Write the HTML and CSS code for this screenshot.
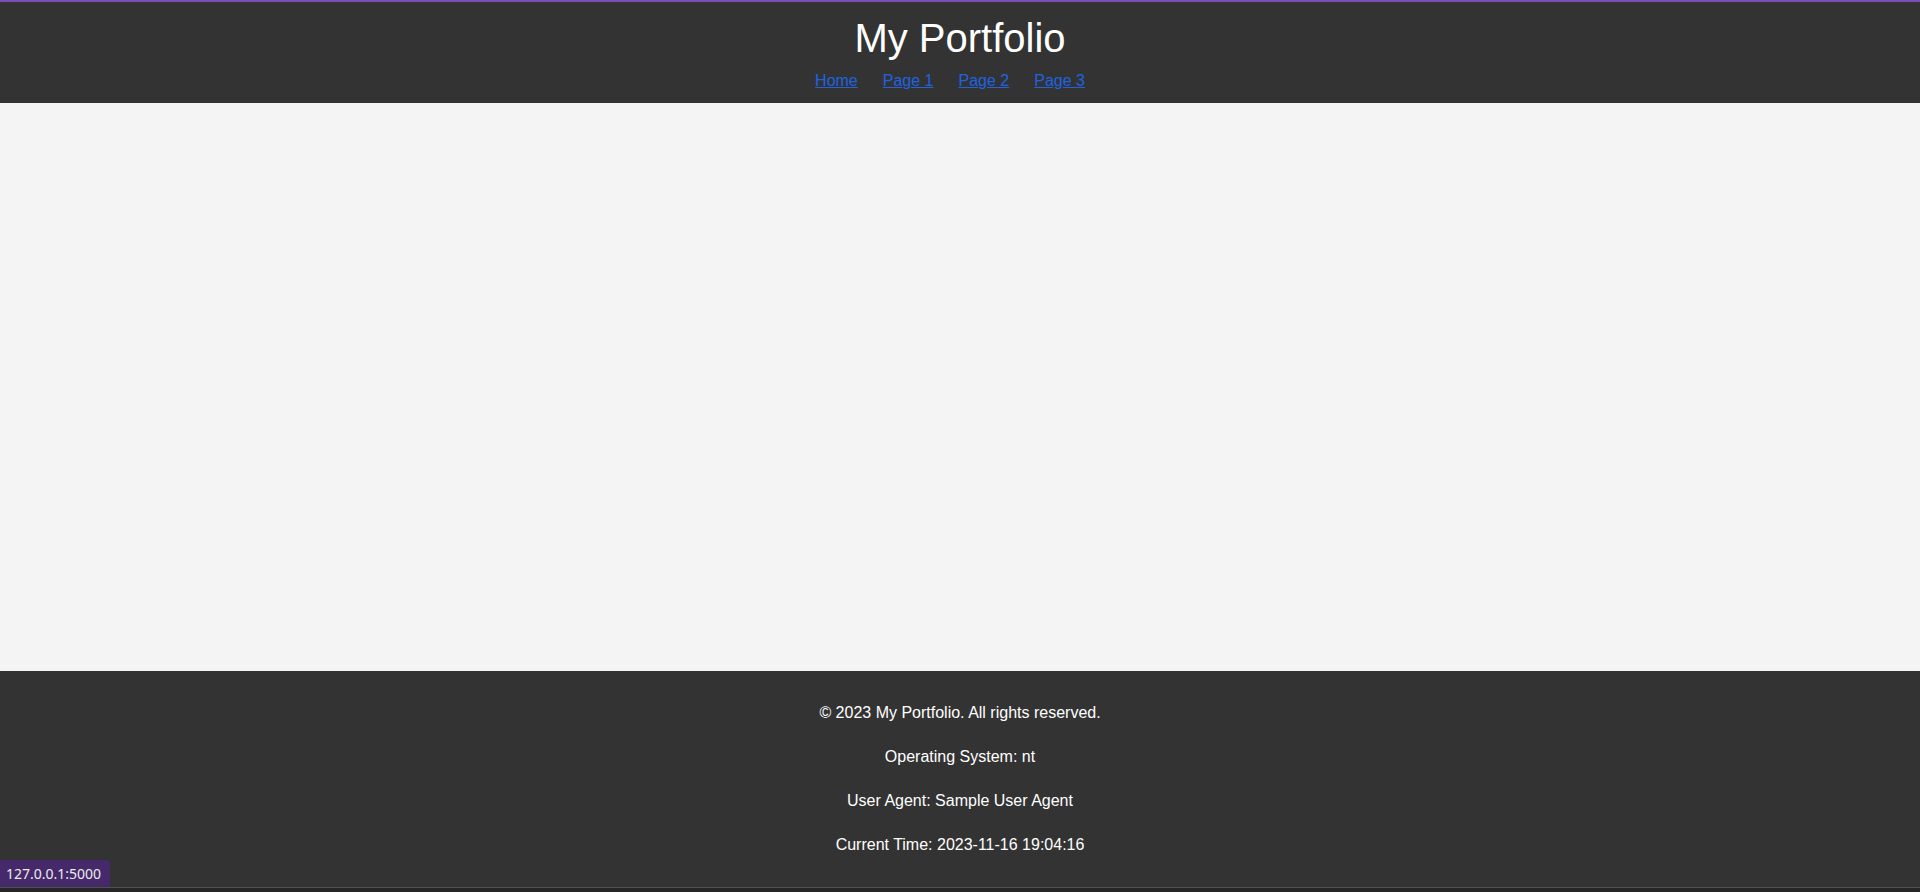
FILE: index.html
```html
<!DOCTYPE html>
<html lang="en">
<head>
<meta charset="utf-8">
<title>My Portfolio</title>
<link rel="stylesheet" href="styles.css">
</head>
<body>
<div class="page">
  <header class="site-header">
    <h1 class="site-title">My Portfolio</h1>
    <nav class="site-nav">
      <ul class="nav-list">
        <li class="nav-item"><a href="#">Home</a></li>
        <li class="nav-item"><a href="#">Page 1</a></li>
        <li class="nav-item"><a href="#">Page 2</a></li>
        <li class="nav-item"><a href="#">Page 3</a></li>
      </ul>
    </nav>
  </header>
  <main class="site-main"></main>
  <footer class="site-footer">
    <p class="footer-line">© 2023 My Portfolio. All rights reserved.</p>
    <p class="footer-line">Operating System: nt</p>
    <p class="footer-line">User Agent: Sample User Agent</p>
    <p class="footer-line">Current Time: 2023-11-16 19:04:16</p>
  </footer>
  <div class="window-edge"></div>
</div>
<div class="status-bubble">127.0.0.1:5000</div>
</body>
</html>
```

FILE: styles.css
```css
html, body {
  margin: 0;
  padding: 0;
}

body {
  font-family: "Liberation Sans", Arial, sans-serif;
  font-size: 16px;
  background: #f4f4f4;
  color: #fff;
}

.page {
  display: flex;
  flex-direction: column;
  height: 892px;
}

.site-header {
  background: #333333;
  border-top: 2px solid #7a4fb4;
  padding: 13px 0 13px;
  text-align: center;
}

.site-title {
  margin: 0;
  font-size: 40px;
  font-weight: normal;
  line-height: 46px;
  color: #ffffff;
}

.site-nav {
  margin-top: 11px;
}

.nav-list {
  list-style: none;
  margin: 0;
  padding: 0;
  display: flex;
  justify-content: center;
  gap: 5px;
  line-height: 18px;
}

.nav-item {
  margin-right: 20px;
}

.nav-item a {
  color: #1f63e0;
  text-decoration: underline;
}

.site-main {
  flex: 1;
  background: #f4f4f4;
}

.site-footer {
  background: #333333;
  padding: 12px 0 12px;
  text-align: center;
}

.footer-line {
  margin: 16px 0;
  line-height: 28px;
  color: #ffffff;
}

.window-edge {
  height: 4px;
  background: #262626;
  border-top: 1px solid #505050;
}

.status-bubble {
  position: fixed;
  left: 0;
  bottom: 5px;
  height: 27px;
  width: 104px;
  padding-left: 6px;
  background: #45296b;
  color: #ececec;
  font-family: "Noto Sans", "Open Sans", sans-serif;
  font-size: 14px;
  line-height: 27px;
  border-top-right-radius: 4px;
}
```
